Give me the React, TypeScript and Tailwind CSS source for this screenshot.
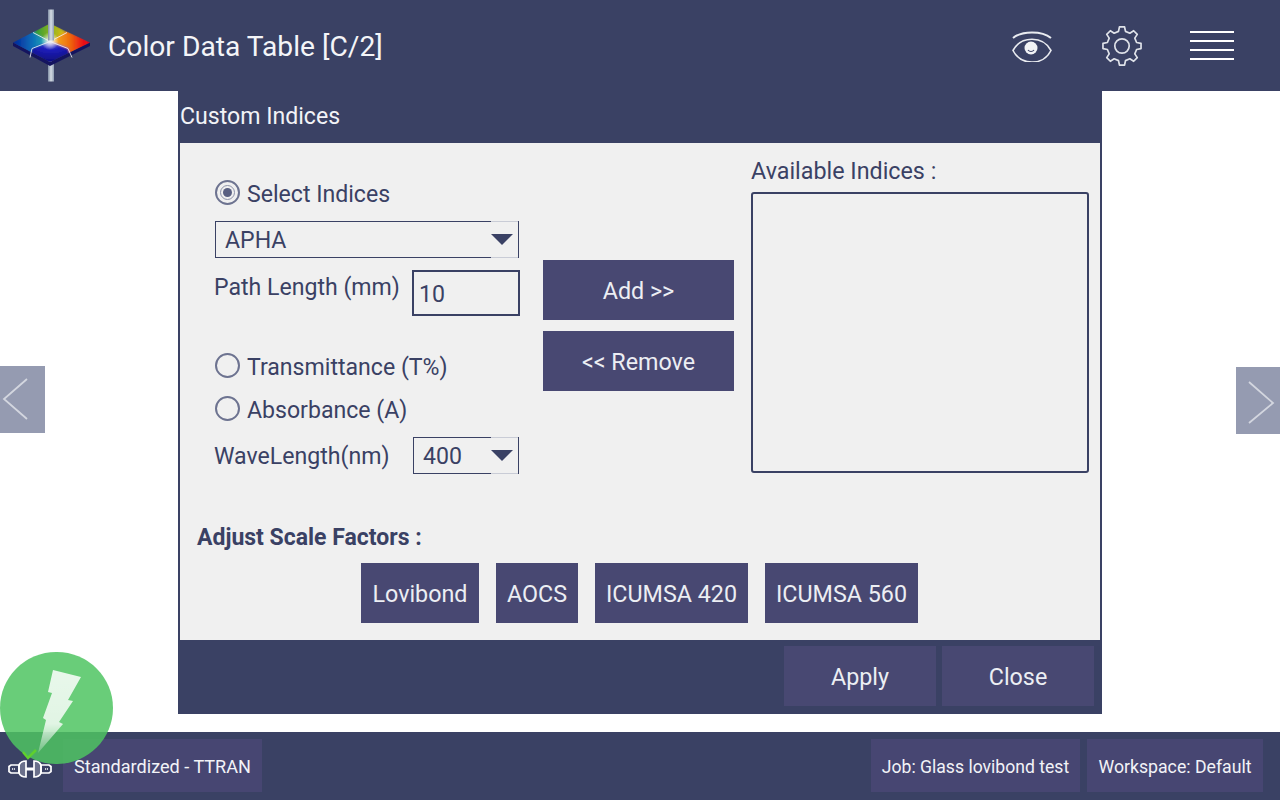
function Logo() {
  return (
    <svg width="80" height="74" viewBox="0 0 80 74" className="shrink-0">
      <defs>
        <linearGradient id="topFace" x1="0" y1="0" x2="1" y2="0">
          <stop offset="0" stopColor="#1f9a3c" />
          <stop offset="0.5" stopColor="#88b020" />
          <stop offset="1" stopColor="#e8c010" />
        </linearGradient>
        <linearGradient id="leftFace" x1="0" y1="0" x2="1" y2="0">
          <stop offset="0" stopColor="#04209a" />
          <stop offset="0.55" stopColor="#0a70b8" />
          <stop offset="1" stopColor="#30c0b0" />
        </linearGradient>
        <linearGradient id="rightFace" x1="0" y1="0" x2="1" y2="0">
          <stop offset="0" stopColor="#f4c020" />
          <stop offset="0.45" stopColor="#f07010" />
          <stop offset="0.8" stopColor="#ea0c14" />
          <stop offset="1" stopColor="#e40018" />
        </linearGradient>
        <radialGradient id="bottomFace" cx="0.5" cy="0" r="0.9">
          <stop offset="0" stopColor="#8080e0" />
          <stop offset="0.35" stopColor="#2020c0" />
          <stop offset="1" stopColor="#0c0c78" />
        </radialGradient>
        <filter id="soft" x="-10%" y="-10%" width="120%" height="120%">
          <feGaussianBlur stdDeviation="1" />
        </filter>
        <clipPath id="plate">
          <polygon points="1,33.5 38,14.5 78,33.5 38,53" />
        </clipPath>
        <radialGradient id="glow">
          <stop offset="0" stopColor="#ffffff" />
          <stop offset="1" stopColor="#ffffff" stopOpacity="0" />
        </radialGradient>
        <linearGradient id="pole" x1="0" y1="0" x2="1" y2="0">
          <stop offset="0" stopColor="#7f8ea4" />
          <stop offset="0.5" stopColor="#d5dce4" />
          <stop offset="1" stopColor="#8d9bb0" />
        </linearGradient>
      </defs>
      <rect x="36" y="52" width="6" height="20.5" fill="url(#pole)" />
      <polygon points="1,33.5 38,53 78,33.5 78,37 38,57 1,37" fill="#14145f" />
      <g clipPath="url(#plate)">
        <g filter="url(#soft)">
          <polygon points="0,33.5 21,20 38,32.5 20,42 18,50" fill="url(#leftFace)" />
          <polygon points="21,23.5 38,12 55,23.5 38,32.5" fill="url(#topFace)" />
          <polygon points="55,22 80,33.5 60,50 56,39.5 38,32.5" fill="url(#rightFace)" />
          <polygon points="20,39.5 38,32.5 56,39.5 60,50 38,56 18,50" fill="url(#bottomFace)" />
        </g>
        <circle cx="38" cy="32" r="9" fill="url(#glow)" />
      </g>
      <path d="M21 23.5 L38 32.5 L55 23.5 M38 32.5 L20 39.5 L18 48.5 M38 32.5 L56 39.5 L60 48.5" fill="none" stroke="#eef1f6" strokeWidth="1" opacity="0.85" />
      <rect x="36" y="0.5" width="6" height="31" fill="url(#pole)" />
    </svg>
  );
}

function EyeIcon() {
  return (
    <svg width="40" height="32" viewBox="0 0 40 32" fill="none" stroke="#e9ebf0" strokeWidth="1.6">
      <path d="M1 8 C10 0.5 30 0.5 39 8" strokeWidth="2" />
      <path d="M1 20.5 C9 5.5 31 5.5 39 20.5 C31 36 9 36 1 20.5 Z" />
      <circle cx="19" cy="18" r="6.5" fill="#f2f3f6" stroke="none" />
      <path d="M16 20 C17.5 22 20.5 22 22 20" stroke="#3a4164" strokeWidth="1.2" />
    </svg>
  );
}

// eight square teeth around the hub
function gearPath() {
  const teeth = 8;
  const pts: string[] = [];
  for (let i = 0; i < teeth; i++) {
    const a = (i * 2 * Math.PI) / teeth - Math.PI / 2;
    const step = (2 * Math.PI) / teeth;
    const corners: [number, number][] = [
      [15, a - step * 0.3],
      [19.2, a - step * 0.17],
      [19.2, a + step * 0.17],
      [15, a + step * 0.3],
    ];
    corners.forEach(([r, t]) => {
      pts.push(`${(21 + r * Math.cos(t)).toFixed(2)} ${(21 + r * Math.sin(t)).toFixed(2)}`);
    });
  }
  return `M${pts.join(" L")} Z`;
}

function GearIcon() {
  return (
    <svg width="42" height="42" viewBox="0 0 42 42" fill="none" stroke="#dfe2e9" strokeWidth="1.7" strokeLinejoin="round">
      <path d={gearPath()} />
      <circle cx="21" cy="21" r="7.2" />
    </svg>
  );
}

function PlugIcon() {
  return (
    <svg width="44" height="18" viewBox="0 0 44 18" fill="none" stroke="#ffffff" strokeWidth="1.7">
      <path d="M1 6.5 L3 5 H11 V13 H3 L1 11.5 Z" />
      <path d="M43 6.5 L41 5 H33 V13 H41 L43 11.5 Z" />
      <path d="M11 5 C12 2.5 14 1 18 1 V17 C14 17 12 15.5 11 13 Z" fill="#ffffff" fillOpacity="0.25" />
      <path d="M33 5 C32 2.5 30 1 26 1 V17 C30 17 32 15.5 33 13 Z" fill="#ffffff" fillOpacity="0.25" />
      <path d="M18 9 H26" strokeWidth="3" />
      <path d="M4 9 H7 M37 9 H40" strokeWidth="1.4" strokeDasharray="1.2 0.8" />
    </svg>
  );
}

function DropArrow() {
  return (
    <div className="-my-px flex h-[37px] w-[27px] items-center justify-start border-y border-y-[#c9ccd6]">
      <svg width="22" height="11" viewBox="0 0 22 11">
        <polygon points="0,0 22,0 11,11" fill="#3a4164" />
      </svg>
    </div>
  );
}

function Radio({ checked, label }: { checked?: boolean; label: string }) {
  return (
    <div className="flex h-[30px] items-center gap-[7px]">
      <div className="mb-[3px] flex h-[25px] w-[25px] items-center justify-center rounded-full border-2 border-[#6d7390]">
        {checked && (
          <div className="flex h-[15px] w-[15px] items-center justify-center rounded-full border border-[#8d92a9]">
            <div className="h-[9px] w-[9px] rounded-full bg-[#5a6082]" />
          </div>
        )}
      </div>
      <span className="pt-[2px] text-[23.1px] leading-[30px]">{label}</span>
    </div>
  );
}

function ActionButton({ label, className }: { label: string; className: string }) {
  return (
    <button className={`flex items-center justify-center bg-[#484872] pt-[3px] text-[23.3px] text-[#eceef3] ${className}`}>
      {label}
    </button>
  );
}

function StatusChip({ label, className }: { label: string; className: string }) {
  return (
    <div className={`flex h-[53px] items-center justify-center bg-[#474672] pt-[3px] text-[#f2f3f7] ${className}`}>
      {label}
    </div>
  );
}

export default function App() {
  return (
    <div className="relative flex h-[800px] w-[1280px] flex-col overflow-hidden bg-white font-['Roboto',sans-serif] text-[#3a4164]">
      {/* Header */}
      <header className="flex h-[91px] shrink-0 items-center bg-[#3a4164] pl-[12px] text-white">
        <Logo />
        <h1 className="ml-[16px] pt-[4px] text-[28.2px] font-normal text-[#f4f5f8]">Color Data Table [C/2]</h1>
        <div className="ml-auto flex items-center pr-[46px]">
          <EyeIcon />
          <div className="ml-[49px]">
            <GearIcon />
          </div>
          <div className="ml-[47px] flex w-[44px] flex-col gap-[6.5px]">
            <div className="h-[2.5px] bg-white" />
            <div className="h-[2.5px] bg-white" />
            <div className="h-[2.5px] bg-white" />
            <div className="h-[2.5px] bg-white" />
          </div>
        </div>
      </header>

      {/* Main */}
      <main className="relative h-[641px] shrink-0 bg-white">
        <div className="absolute left-0 top-[275px] flex h-[67px] w-[45px] items-center bg-[#959bb1]">
          <svg width="45" height="67" viewBox="0 0 45 67" fill="none" stroke="#d3d6df" strokeWidth="1.8">
            <path d="M27 13 L4 33 L27 53" />
          </svg>
        </div>
        <div className="absolute right-0 top-[276px] flex h-[67px] w-[44px] items-center bg-[#959bb1]">
          <svg width="44" height="67" viewBox="0 0 44 67" fill="none" stroke="#d3d6df" strokeWidth="1.8">
            <path d="M13 15 L37 36 L13 56" />
          </svg>
        </div>

        {/* Dialog */}
        <div className="ml-[178px] flex h-[623px] w-[924px] flex-col bg-[#3a4164]">
          <div className="flex h-[52px] shrink-0 items-center pl-[2px] text-[23.1px] text-[#f2f3f7]">Custom Indices</div>
          <div className="mx-[2px] flex h-[497px] shrink-0 flex-col bg-[#f0f0f0]">
            <div className="flex h-[336px] shrink-0 pl-[35px]">
              {/* Left column */}
              <div className="flex w-[305px] flex-col pt-[36px]">
                <Radio checked label="Select Indices" />
                <div className="mt-[12px] flex h-[37px] w-[304px] items-center justify-between border border-[#3a4164] pl-[9px] text-[23.1px]">
                  <span className="pt-[4px]">APHA</span>
                  <DropArrow />
                </div>
                <div className="mt-[12px] flex h-[46px] items-start justify-between">
                  <span className="-ml-px text-[23.1px] leading-[36px]">Path Length (mm)</span>
                  <div className="flex h-[46px] w-[108px] items-center border-2 border-[#3a4164] pl-[5px] pt-[4px] text-[23.1px]">10</div>
                </div>
                <div className="mt-[36px]">
                  <Radio label="Transmittance (T%)" />
                </div>
                <div className="mt-[13px]">
                  <Radio label="Absorbance (A)" />
                </div>
                <div className="mt-[12px] flex h-[37px] w-[304px] items-center justify-between">
                  <span className="-ml-px pt-[4px] text-[23.1px]">WaveLength(nm)</span>
                  <div className="flex h-[37px] w-[106px] items-center justify-between border border-[#3a4164] pl-[9px] text-[23.1px]">
                    <span className="pt-[4px]">400</span>
                    <DropArrow />
                  </div>
                </div>
              </div>

              {/* Middle column */}
              <div className="ml-[23px] flex w-[191px] flex-col gap-[11px] pt-[117px]">
                <ActionButton label="Add >>" className="h-[60px]" />
                <ActionButton label="<< Remove" className="h-[60px]" />
              </div>

              {/* Right column */}
              <div className="ml-[17px] flex w-[338px] flex-col pt-[13px]">
                <span className="h-[36px] text-[23.3px] leading-[30px]">Available Indices :</span>
                <div className="h-[281px] rounded-[3px] border-2 border-[#3a4164]" />
              </div>
            </div>

            {/* Scale factors */}
            <div className="pl-[17px] pt-[43px] text-[23px] font-bold leading-[32px]">Adjust Scale Factors :</div>
            <div className="mt-[9px] flex pl-[181px]">
              <ActionButton label="Lovibond" className="h-[60px] w-[118px]" />
              <ActionButton label="AOCS" className="ml-[17px] h-[60px] w-[82px]" />
              <ActionButton label="ICUMSA 420" className="ml-[17px] h-[60px] w-[153px]" />
              <ActionButton label="ICUMSA 560" className="ml-[17px] h-[60px] w-[153px]" />
            </div>
          </div>
          <div className="flex justify-end gap-[6px] pr-[8px] pt-[6px]">
            <ActionButton label="Apply" className="h-[60px] w-[152px]" />
            <ActionButton label="Close" className="h-[60px] w-[152px]" />
          </div>
        </div>
      </main>

      {/* Status bar */}
      <footer className="flex h-[68px] shrink-0 items-start bg-[#3a4164] pl-[63px] pr-[17px] pt-[7px]">
        <StatusChip label="Standardized - TTRAN" className="w-[199px] text-[18.1px]" />
        <StatusChip label="Job: Glass lovibond test" className="ml-auto w-[209px] text-[17.6px]" />
        <StatusChip label="Workspace: Default" className="ml-[7px] w-[176px] text-[17.7px]" />
      </footer>

      {/* Connection badge */}
      <div className="absolute left-0 top-[652px] h-[112px] w-[113px] rounded-full bg-[#4fc462]/85">
        <svg width="113" height="112" viewBox="0 0 113 112">
          <defs>
            <linearGradient id="bolt" x1="0" y1="0" x2="0" y2="1">
              <stop offset="0" stopColor="#ffffff" stopOpacity="0.85" />
              <stop offset="0.65" stopColor="#ffffff" stopOpacity="0.8" />
              <stop offset="1" stopColor="#ffffff" stopOpacity="0.2" />
            </linearGradient>
          </defs>
          <polygon points="53,18 81,25 68,48 73,49 59,70 63,72 38,101 46,68 43,66 52,41 48,40" fill="url(#bolt)" />
        </svg>
      </div>
      <svg width="16" height="12" viewBox="0 0 16 12" className="absolute left-[21px] top-[748px]" fill="none" stroke="#5fd02e" strokeWidth="2.5">
        <path d="M2 4 L7 10 L15 2" />
      </svg>
      <div className="absolute left-[8px] top-[760px]">
        <PlugIcon />
      </div>
    </div>
  );
}
